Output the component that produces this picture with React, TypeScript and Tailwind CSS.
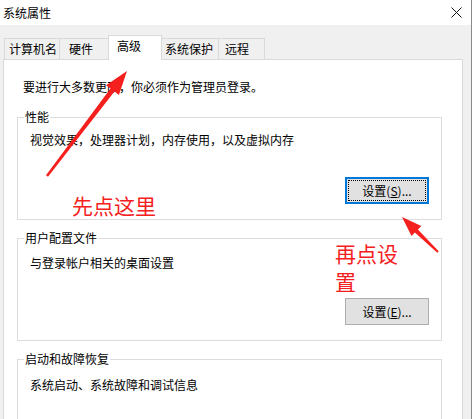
import React from "react";

const FONT = '"Noto Sans CJK SC", "Microsoft YaHei", "Noto Sans", sans-serif';

function Tab({ label, w, pl, selected, first }: { label: string; w: number; pl: number; selected?: boolean; first?: boolean }) {
  if (selected) {
    return (
      <div
        className="h-[25px] -mb-px -ml-px bg-white border border-b-0 border-[#d9d9d9] relative z-10 pt-[2px] leading-[16px]"
        style={{ width: w, paddingLeft: pl }}
      >
        {label}
      </div>
    );
  }
  return (
    <div
      className={`h-[21px] bg-[#f0f0f0] border border-b-0 border-[#d9d9d9] flex items-center leading-[16px] ${first ? "" : "-ml-px"}`}
      style={{ width: w, paddingLeft: pl }}
    >
      {label}
    </div>
  );
}

function Btn({ label, mnemonic, focused }: { label: string; mnemonic: string; focused?: boolean }) {
  return (
    <div
      className={
        focused
          ? "w-[84px] h-[27px] bg-[#e1e1e1] border-2 border-[#0078d7] outline-1 outline-dotted outline-black outline-offset-[-4px] flex items-center justify-center leading-[16px]"
          : "w-[84px] h-[27px] bg-[#e1e1e1] border border-[#adadad] flex items-center justify-center leading-[16px]"
      }
    >
      <span>
        {label}(<span className="underline">{mnemonic}</span>)...
      </span>
    </div>
  );
}

export default function App() {
  return (
    <div
      className="w-[474px] h-[419px] overflow-hidden relative bg-white flex text-[12px] text-black"
      style={{ fontFamily: FONT }}
    >
      <div className="w-[472px] h-full flex flex-col bg-[#f0f0f0] border-r border-[#8a8a8a] shrink-0">
        {/* title bar */}
        <div className="h-[25px] bg-white flex items-center justify-between pl-[3px] pr-[9px] shrink-0">
          <span className="leading-[16px]">系统属性</span>
          <svg width="11" height="11" viewBox="0 0 11 11" className="mt-[-1px]">
            <path d="M0.5 0.5 L10.5 10.5 M10.5 0.5 L0.5 10.5" stroke="#111" strokeWidth="1" fill="none" />
          </svg>
        </div>

        {/* tabs */}
        <div className="h-[24px] mt-[10px] flex items-end pl-[4px] shrink-0">
          <Tab label="计算机名" w={56} pl={4} first />
          <Tab label="硬件" w={50} pl={9} />
          <Tab label="高级" w={54} pl={8} selected />
          <Tab label="系统保护" w={58} pl={3} />
          <Tab label="远程" w={47} pl={6} />
        </div>

        {/* panel */}
        <div className="ml-[3px] w-[460px] flex-1 bg-white border border-[#d9d9d9] pl-[13px] relative">
          <div className="mt-[19px] pl-[6px] leading-[16px]">要进行大多数更改，你必须作为管理员登录。</div>

          <fieldset className="mt-[14px] w-[425px] border border-[#dcdcdc] pb-[15px]">
            <legend className="ml-[6px] px-[1px] leading-[16px]">性能</legend>
            <div className="mt-[7px] pl-[12px] leading-[16px]">视觉效果，处理器计划，内存使用，以及虚拟内存</div>
            <div className="mt-[29px] flex justify-end pr-[12px]">
              <Btn label="设置" mnemonic="S" focused />
            </div>
          </fieldset>

          <fieldset className="mt-[10px] w-[425px] border border-[#dcdcdc] pb-[15px]">
            <legend className="ml-[6px] px-[1px] leading-[16px]">用户配置文件</legend>
            <div className="mt-[9px] pl-[12px] leading-[16px]">与登录帐户相关的桌面设置</div>
            <div className="mt-[27px] flex justify-end pr-[12px]">
              <Btn label="设置" mnemonic="E" />
            </div>
          </fieldset>

          <fieldset className="mt-[10px] w-[425px] h-[120px] border border-[#dcdcdc]">
            <legend className="ml-[6px] px-[1px] leading-[16px]">启动和故障恢复</legend>
            <div className="mt-[10px] pl-[12px] leading-[16px]">系统启动、系统故障和调试信息</div>
          </fieldset>
        </div>
      </div>

      {/* annotations */}
      <div className="absolute left-[72px] top-[191px] text-[21px] leading-[28px] text-[#f5201e]">先点这里</div>
      <div className="absolute left-[335px] top-[239px] w-[66px] text-[21px] leading-[28px] text-[#f5201e]">再点设置</div>

      <svg className="absolute inset-0 pointer-events-none" width="474" height="419" viewBox="0 0 474 419">
        <polygon
          points="127,71 118.9,94.9 114.5,91.6 48,176.7 46,175.3 110.5,88.6 106.1,85.3"
          fill="#f5201e"
        />
        <polygon
          points="402,217 421.3,226 417.9,229.4 438.7,251.3 437.3,252.7 414.9,232.6 411.5,236"
          fill="#f5201e"
        />
      </svg>
    </div>
  );
}
